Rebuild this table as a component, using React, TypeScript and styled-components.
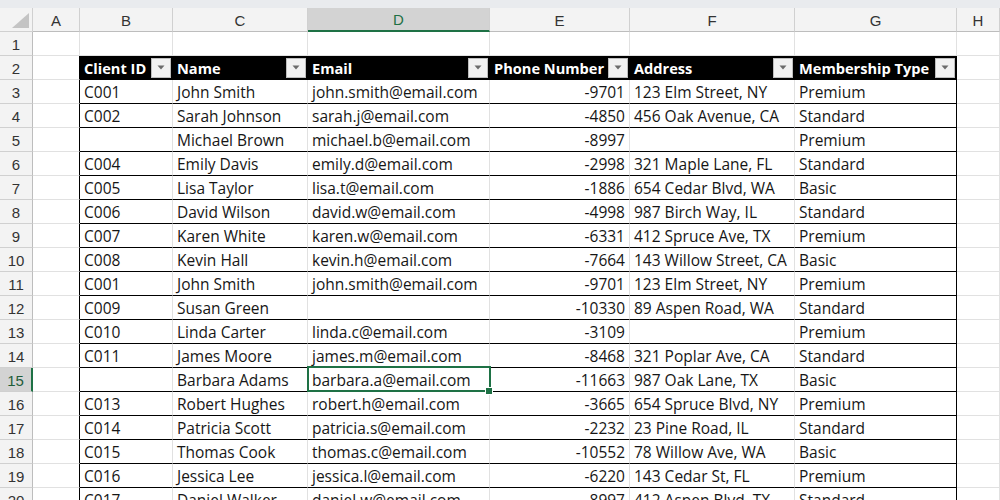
import React from "react";
import styled, { createGlobalStyle, css } from "styled-components";

const GlobalStyle = createGlobalStyle`
  html, body { margin: 0; padding: 0; background: #ffffff; }
  body { font-family: "Open Sans", "Liberation Sans", sans-serif; }
`;

const GREEN = "#1e7145";
const GRID = "#e1e1e1";
const HEAD_BORDER = "#d0d0d0";

const Sheet = styled.div`
  width: 1000px;
  height: 500px;
  overflow: hidden;
  display: flex;
  flex-direction: column;
  background: #fff;
`;

const TopBand = styled.div`
  height: 8px;
  flex: none;
  background: #e9ebee;
`;

const Grid = styled.div`
  display: grid;
  grid-template-columns: 33px 47px 93px 135px 182px 140px 165px 162px 1fr;
  grid-auto-rows: 24px;
`;

const Corner = styled.div`
  position: relative;
  background: #f3f3f3;
  border-right: 1px solid ${HEAD_BORDER};
  border-bottom: 1px solid ${HEAD_BORDER};
  box-sizing: border-box;
`;

const CornerTriangle = styled.svg`
  position: absolute;
  right: 3px;
  bottom: 3px;
`;

const ColHead = styled.div<{ $selected?: boolean }>`
  box-sizing: border-box;
  display: flex;
  align-items: center;
  justify-content: center;
  padding-top: 1px;
  font-family: "Liberation Sans", Arial, sans-serif;
  font-size: 15px;
  color: #333;
  background: #f3f3f3;
  border-right: 1px solid ${HEAD_BORDER};
  border-bottom: 1px solid #bdbdbd;
  ${(p) =>
    p.$selected &&
    css`
      background: #d3d3d3;
      color: ${GREEN};
      border-bottom: 2px solid ${GREEN};
    `}
`;

const RowHead = styled.div<{ $selected?: boolean }>`
  box-sizing: border-box;
  display: flex;
  align-items: center;
  justify-content: center;
  padding-top: 2px;
  font-family: "Liberation Sans", Arial, sans-serif;
  font-size: 15px;
  color: #333;
  background: #f3f3f3;
  border-right: 1px solid #bdbdbd;
  border-bottom: 1px solid ${HEAD_BORDER};
  ${(p) =>
    p.$selected &&
    css`
      background: #d3d3d3;
      color: #1f5d3a;
      border-right: 2px solid ${GREEN};
    `}
`;

type CellKind = "empty" | "header" | "data";

const Cell = styled.div<{
  $kind: CellKind;
  $right?: boolean;
  $edge?: boolean;
  $selected?: boolean;
}>`
  position: relative;
  box-sizing: border-box;
  display: flex;
  align-items: center;
  justify-content: ${(p) => (p.$right ? "flex-end" : "flex-start")};
  padding: 1px 4px 0 4px;
  white-space: nowrap;
  overflow: visible;
  font-size: 15.5px;
  color: #161616;
  border-right: 1px solid ${(p) => (p.$edge ? "#000" : GRID)};
  border-bottom: 1px solid ${GRID};
  ${(p) =>
    p.$kind === "header" &&
    css`
      background: #000;
      color: #fff;
      font-weight: 700;
      font-size: 14.6px;
      border-right-color: #000;
      border-bottom-color: #000;
      justify-content: space-between;
      padding: 0 1px 0 4px;
    `}
  ${(p) =>
    p.$kind === "data" &&
    css`
      border-bottom-color: #000;
    `}
  ${(p) =>
    p.$selected &&
    css`
      &::after {
        content: "";
        position: absolute;
        left: -1px;
        top: -2px;
        right: -2px;
        bottom: -1px;
        border: 2px solid ${GREEN};
        pointer-events: none;
      }
    `}
`;

const HeaderLabel = styled.span`
  padding-top: 1px;
`;

const FilterButton = styled.span`
  flex: none;
  box-sizing: border-box;
  width: 20px;
  height: 20px;
  background: #f1f1f1;
  border: 1px solid #bdbdbd;
  display: flex;
  align-items: center;
  justify-content: center;
`;

const FillHandle = styled.span`
  position: absolute;
  right: -4px;
  bottom: -4px;
  width: 6px;
  height: 6px;
  background: ${GREEN};
  border: 1px solid #fff;
  z-index: 2;
`;

const columns = ["A", "B", "C", "D", "E", "F", "G", "H"];
const headers = ["Client ID", "Name", "Email", "Phone Number", "Address", "Membership Type"];

const rows: [string, string, string, string, string, string][] = [
  ["C001", "John Smith", "john.smith@email.com", "-9701", "123 Elm Street, NY", "Premium"],
  ["C002", "Sarah Johnson", "sarah.j@email.com", "-4850", "456 Oak Avenue, CA", "Standard"],
  ["", "Michael Brown", "michael.b@email.com", "-8997", "", "Premium"],
  ["C004", "Emily Davis", "emily.d@email.com", "-2998", "321 Maple Lane, FL", "Standard"],
  ["C005", "Lisa Taylor", "lisa.t@email.com", "-1886", "654 Cedar Blvd, WA", "Basic"],
  ["C006", "David Wilson", "david.w@email.com", "-4998", "987 Birch Way, IL", "Standard"],
  ["C007", "Karen White", "karen.w@email.com", "-6331", "412 Spruce Ave, TX", "Premium"],
  ["C008", "Kevin Hall", "kevin.h@email.com", "-7664", "143 Willow Street, CA", "Basic"],
  ["C001", "John Smith", "john.smith@email.com", "-9701", "123 Elm Street, NY", "Premium"],
  ["C009", "Susan Green", "", "-10330", "89 Aspen Road, WA", "Standard"],
  ["C010", "Linda Carter", "linda.c@email.com", "-3109", "", "Premium"],
  ["C011", "James Moore", "james.m@email.com", "-8468", "321 Poplar Ave, CA", "Standard"],
  ["", "Barbara Adams", "barbara.a@email.com", "-11663", "987 Oak Lane, TX", "Basic"],
  ["C013", "Robert Hughes", "robert.h@email.com", "-3665", "654 Spruce Blvd, NY", "Premium"],
  ["C014", "Patricia Scott", "patricia.s@email.com", "-2232", "23 Pine Road, IL", "Standard"],
  ["C015", "Thomas Cook", "thomas.c@email.com", "-10552", "78 Willow Ave, WA", "Basic"],
  ["C016", "Jessica Lee", "jessica.l@email.com", "-6220", "143 Cedar St, FL", "Premium"],
  ["C017", "Daniel Walker", "daniel.w@email.com", "-8997", "412 Aspen Blvd, TX", "Standard"],
];

const FilterIcon = () => (
  <svg width="8" height="5" viewBox="0 0 8 5">
    <path d="M0.5 0.5 L7.5 0.5 L4 4.5 Z" fill="#6b6b6b" />
  </svg>
);

export default function App() {
  return (
    <>
      <GlobalStyle />
      <Sheet>
        <TopBand />
        <Grid>
          <Corner>
            <CornerTriangle width="17" height="15" viewBox="0 0 17 15">
              <path d="M17 0 L17 15 L0 15 Z" fill="#c4c4c4" />
            </CornerTriangle>
          </Corner>
          {columns.map((c) => (
            <ColHead key={c} $selected={c === "D"}>
              {c}
            </ColHead>
          ))}

          <RowHead>1</RowHead>
          {columns.map((c) => (
            <Cell key={c} $kind="empty" />
          ))}

          <RowHead>2</RowHead>
          <Cell $kind="empty" $edge />
          {headers.map((h) => (
            <Cell key={h} $kind="header">
              <HeaderLabel>{h}</HeaderLabel>
              <FilterButton>
                <FilterIcon />
              </FilterButton>
            </Cell>
          ))}
          <Cell $kind="empty" />

          {rows.map((r, i) => {
            const rowNum = i + 3;
            const sel = rowNum === 15;
            return (
              <React.Fragment key={rowNum}>
                <RowHead $selected={sel}>{rowNum}</RowHead>
                <Cell $kind="empty" $edge />
                {r.map((v, j) => (
                  <Cell
                    key={j}
                    $kind="data"
                    $right={j === 3}
                    $edge={j === 5}
                    $selected={sel && j === 2}
                  >
                    {v}
                    {sel && j === 2 && <FillHandle />}
                  </Cell>
                ))}
                <Cell $kind="empty" />
              </React.Fragment>
            );
          })}
        </Grid>
      </Sheet>
    </>
  );
}
